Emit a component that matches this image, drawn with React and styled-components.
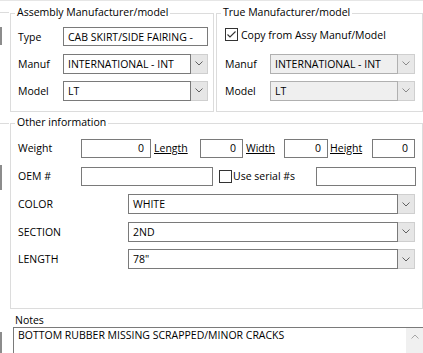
import React from 'react';
import styled, { createGlobalStyle } from 'styled-components';

const GlobalStyle = createGlobalStyle`
  html, body { margin: 0; padding: 0; background: #fff; }
  body {
    font-family: "Open Sans", "Noto Sans", "Liberation Sans", sans-serif;
    font-size: 10.5px;
    color: #000;
  }
  * { box-sizing: border-box; }
`;

const Page = styled.div`
  width: 423px;
  height: 353px;
  overflow: hidden;
  display: grid;
  grid-template-columns: 10px 413px;
  border-top: 1px solid #e6e6e6;
  background: #fff;
`;

const LeftStrip = styled.div`
  display: flex;
  flex-direction: column;
  align-items: flex-start;
`;

const StubLine = styled.div`
  margin-top: ${p => p.$top}px;
  width: 9px;
  height: 1px;
  background: #dcdcdc;
`;

const StubEdge = styled.div`
  margin-top: ${p => p.$top}px;
  width: 2px;
  height: ${p => p.$h}px;
  background: #8c8c8c;
`;

const Main = styled.div`
  display: flex;
  flex-direction: column;
  min-width: 0;
`;

const TopRow = styled.div`
  display: flex;
  gap: 2px;
  margin-top: 12px;
`;

const GroupBox = styled.div`
  width: ${p => p.$w}px;
  height: ${p => p.$h}px;
  border: 1px solid #dcdcdc;
  display: flex;
  flex-direction: column;
  flex-shrink: 0;
  margin-top: ${p => p.$mt || 0}px;
`;

const GroupTitle = styled.div`
  align-self: flex-start;
  margin: -9px 0 0 4px;
  padding: 0 2px;
  height: 14px;
  line-height: 14px;
  background: #fff;
  white-space: nowrap;
`;

const FormGrid = styled.div`
  display: grid;
  grid-template-columns: 45px 145px;
  grid-auto-rows: 27px;
  align-items: center;
  padding-left: ${p => p.$pl}px;
  margin-top: 4px;
`;

const Label = styled.div`
  white-space: nowrap;
  line-height: 14px;
  width: ${p => (p.$w ? `${p.$w}px` : 'auto')};
  flex-shrink: 0;
`;

const ULabel = styled(Label)`
  text-decoration: underline;
  margin-left: ${p => p.$ml || 0}px;
`;

const TextBox = styled.div`
  width: ${p => (p.$w ? `${p.$w}px` : '100%')};
  height: 19px;
  border: 1px solid #7a7a7a;
  background: #fff;
  display: flex;
  align-items: center;
  justify-content: ${p => (p.$num ? 'flex-end' : 'flex-start')};
  padding: ${p => (p.$num ? '0 6px 0 0' : '0 0 0 4px')};
  white-space: nowrap;
  overflow: hidden;
  flex-shrink: 0;
  margin-left: ${p => (p.$push ? 'auto' : '0')};
`;

const Combo = styled.div`
  display: flex;
  width: ${p => (p.$w ? `${p.$w}px` : '100%')};
  height: 20px;
  flex-shrink: 0;
`;

const ComboText = styled.div`
  flex: 1;
  min-width: 0;
  border: 1px solid ${p => (p.$disabled ? '#b0b0b0' : '#7a7a7a')};
  background: ${p => (p.$disabled ? '#efefef' : '#fff')};
  display: flex;
  align-items: center;
  padding-left: 4px;
  white-space: nowrap;
  overflow: hidden;
`;

const ComboButton = styled.div`
  width: 17px;
  flex-shrink: 0;
  background: ${p => (p.$disabled ? '#e8e8e8' : '#e6e6e6')};
  border: 1px solid #cfcfcf;
  border-left: none;
  display: flex;
  align-items: center;
  justify-content: center;
`;

const CheckBoxBox = styled.div`
  width: 13px;
  height: 13px;
  border: 1px solid #333;
  background: #fff;
  flex-shrink: 0;
  display: flex;
  align-items: center;
  justify-content: center;
  margin-left: ${p => p.$ml || 0}px;
`;

const CheckRow = styled.div`
  grid-column: 1 / -1;
  display: flex;
  align-items: center;
  gap: 3px;
  margin-top: -4px;
`;

const RowsBlock = styled.div`
  display: flex;
  flex-direction: column;
  margin-top: 5px;
`;

const InfoRow = styled.div`
  display: flex;
  align-items: center;
  height: ${p => p.$h}px;
  padding: 0 6px 0 7px;
`;

const CheckText = styled.div`
  margin-left: ${p => p.$ml || 0}px;
  white-space: nowrap;
  line-height: 14px;
`;

const NotesLabel = styled.div`
  margin: 4px 0 0 5px;
  height: 14px;
  line-height: 14px;
`;

const NotesBox = styled.div`
  flex: 1;
  margin-left: 3px;
  border-top: 1px solid #7a7a7a;
  border-left: 1px solid #7a7a7a;
  display: flex;
  min-height: 0;
`;

const NotesText = styled.div`
  flex: 1;
  padding-left: 4px;
  line-height: 14px;
  white-space: nowrap;
  overflow: hidden;
`;

const ScrollBar = styled.div`
  width: 17px;
  background: #f0f0f0;
  display: flex;
  flex-direction: column;
  align-items: center;
`;

const ScrollArrow = styled.div`
  height: 17px;
  display: flex;
  align-items: center;
  justify-content: center;
`;

const Chevron = ({ color = '#606060' }) => (
  <svg width="8" height="5" viewBox="0 0 8 5">
    <path d="M0.5 0.5 L4 4 L7.5 0.5" fill="none" stroke={color} strokeWidth="1" />
  </svg>
);

const UpChevron = () => (
  <svg width="8" height="5" viewBox="0 0 8 5">
    <path d="M0.5 4.5 L4 1 L7.5 4.5" fill="none" stroke="#a6a6a6" strokeWidth="1" />
  </svg>
);

const Check = () => (
  <svg width="11" height="11" viewBox="0 0 11 11">
    <path d="M1.5 5.5 L4 8 L9.5 2.5" fill="none" stroke="#333" strokeWidth="1.1" />
  </svg>
);

const ComboField = ({ value, w, disabled }) => (
  <Combo $w={w}>
    <ComboText $disabled={disabled}>{value}</ComboText>
    <ComboButton $disabled={disabled}>
      <Chevron color={disabled ? '#8a8a8a' : '#606060'} />
    </ComboButton>
  </Combo>
);

export default function App() {
  return (
    <>
      <GlobalStyle />
      <Page>
        <LeftStrip>
          <StubLine $top={11} />
          <StubEdge $top={14} $h={18} />
          <StubLine $top={78} />
          <StubEdge $top={41} $h={25} />
          <StubEdge $top={142} $h={22} />
        </LeftStrip>
        <Main>
          <TopRow>
            <GroupBox $w={204} $h={99}>
              <GroupTitle>Assembly Manufacturer/model</GroupTitle>
              <FormGrid $pl={7}>
                <Label>Type</Label>
                <TextBox $w={145}>CAB SKIRT/SIDE FAIRING -</TextBox>
                <Label>Manuf</Label>
                <ComboField w={145} value="INTERNATIONAL - INT" />
                <Label>Model</Label>
                <ComboField w={145} value="LT" />
              </FormGrid>
            </GroupBox>
            <GroupBox $w={207} $h={99}>
              <GroupTitle>True Manufacturer/model</GroupTitle>
              <FormGrid $pl={8}>
                <CheckRow>
                  <CheckBoxBox>
                    <Check />
                  </CheckBoxBox>
                  <CheckText>Copy from Assy Manuf/Model</CheckText>
                </CheckRow>
                <Label>Manuf</Label>
                <ComboField w={145} value="INTERNATIONAL - INT" disabled />
                <Label>Model</Label>
                <ComboField w={145} value="LT" disabled />
              </FormGrid>
            </GroupBox>
          </TopRow>

          <GroupBox $w={413} $h={186} $mt={11}>
            <GroupTitle>Other information</GroupTitle>
            <RowsBlock>
              <InfoRow $h={28}>
                <Label $w={63}>Weight</Label>
                <TextBox $w={70} $num>0</TextBox>
                <ULabel $w={46} $ml={3}>Length</ULabel>
                <TextBox $w={43} $num>0</TextBox>
                <ULabel $w={38} $ml={3}>Width</ULabel>
                <TextBox $w={44} $num>0</TextBox>
                <ULabel $w={42} $ml={2}>Height</ULabel>
                <TextBox $w={43} $num>0</TextBox>
              </InfoRow>
              <InfoRow $h={28}>
                <Label $w={63}>OEM #</Label>
                <TextBox $w={132} />
                <CheckBoxBox $ml={6} />
                <CheckText $ml={1}>Use serial #s</CheckText>
                <TextBox $w={100} $push />
              </InfoRow>
              <InfoRow $h={28}>
                <Label $w={110}>COLOR</Label>
                <ComboField w={287} value="WHITE" />
              </InfoRow>
              <InfoRow $h={27}>
                <Label $w={110}>SECTION</Label>
                <ComboField w={287} value="2ND" />
              </InfoRow>
              <InfoRow $h={28}>
                <Label $w={110}>LENGTH</Label>
                <ComboField w={287} value={'78"'} />
              </InfoRow>
            </RowsBlock>
          </GroupBox>

          <NotesLabel>Notes</NotesLabel>
          <NotesBox>
            <NotesText>BOTTOM RUBBER MISSING SCRAPPED/MINOR CRACKS</NotesText>
            <ScrollBar>
              <ScrollArrow>
                <UpChevron />
              </ScrollArrow>
            </ScrollBar>
          </NotesBox>
        </Main>
      </Page>
    </>
  );
}
